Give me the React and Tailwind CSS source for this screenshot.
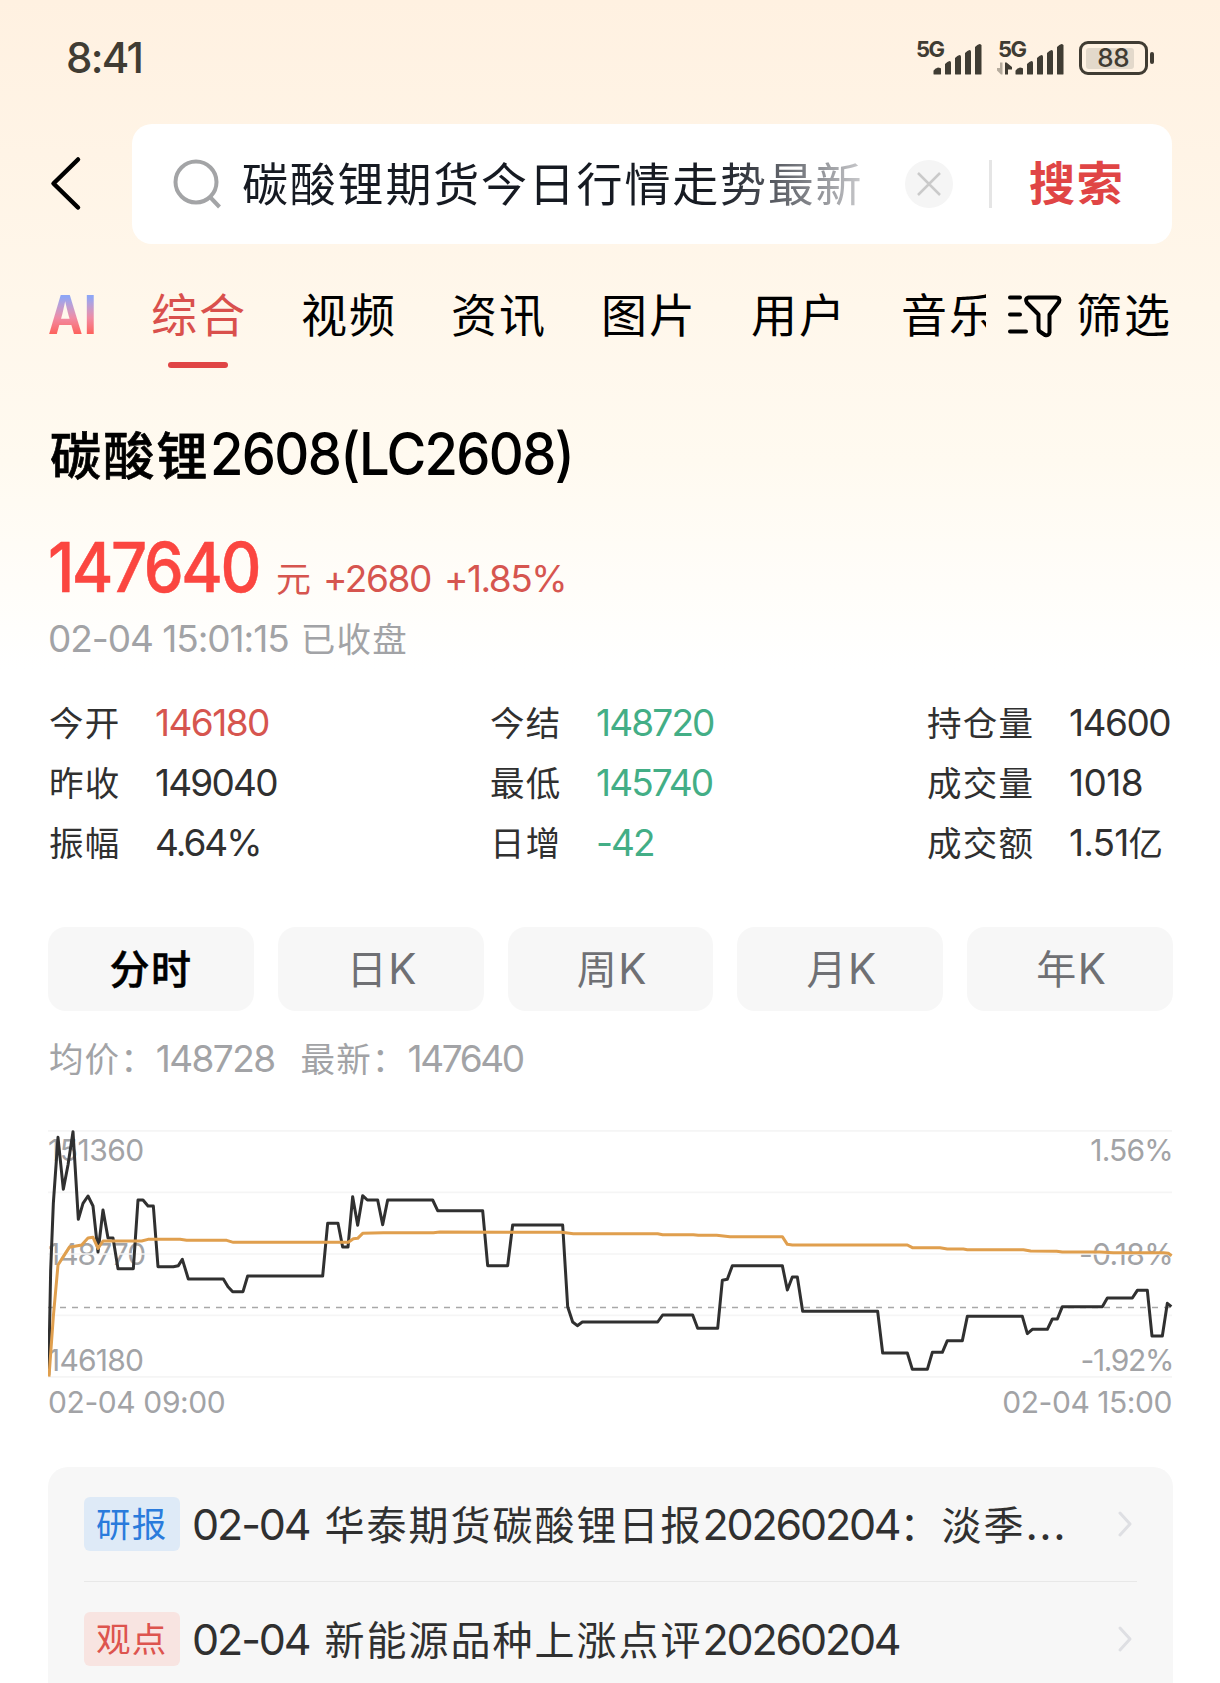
const CJK = /([\u3000-\u9fff\uff00-\uffef]+)/;

/* Latin runs use Inter, Chinese runs use Noto Sans CJK, sharing one baseline. */
function Mixed({ text, zh = "", en = "" }) {
  return text
    .split(CJK)
    .filter(Boolean)
    .map((part, i) =>
      CJK.test(part) ? (
        <span key={i} className={`font-['Noto_Sans_CJK_SC',sans-serif] leading-[0] ${zh}`}>{part}</span>
      ) : (
        <span key={i} className={`leading-[0] ${en}`}>{part}</span>
      )
    );
}

function Signal({ arrows }) {
  return (
    <div className="relative h-[33px] w-[67px]">
      <span className="absolute left-[1px] top-[-4px] text-[22px] font-bold leading-[22px] tracking-[-1.500px] text-[#403c33]">5G</span>
      <svg className="absolute inset-0" width="67" height="33" viewBox="0 0 67 33" fill="#403c33">
        <path d="M18.500 32V28.800Q20 26.500 23 25.500Q26 25.500 26 27V32Q26 32.500 25 32.500H19.500Q18.500 32.500 18.500 32Z" />
        <path d="M30 32V22Q32.500 19.500 34.500 19Q36 19 36 20.500V32Q36 32.500 35 32.500H31Q30 32.500 30 32Z" />
        <path d="M40 32V16Q42.500 13.500 44.500 13Q46 13 46 14.500V32Q46 32.500 45 32.500H41Q40 32.500 40 32Z" />
        <path d="M50 32V11Q52.500 8.500 54.500 8Q56 8 56 9.500V32Q56 32.500 55 32.500H51Q50 32.500 50 32Z" />
        <path d="M60 32V5Q62.500 2.500 64.500 2Q66.500 2 66.500 3.500V32Q66.500 32.500 65.500 32.500H61Q60 32.500 60 32Z" />
        {arrows && (
          <>
            <path d="M3 20.500H5.500V32.500H4L-0.500 28V26H3Z" fill="#b5ab9d" />
            <path d="M8 32.500V20.500H9.500L15 25V27.500H11V32.500Z" />
          </>
        )}
      </svg>
    </div>
  );
}

function StatusBar() {
  return (
    <div className="flex h-[116px] items-center justify-between pl-[66px] pr-[66px] text-[#403c33]">
      <span className="text-[42px] font-medium leading-none tracking-[-1.700px]">8:41</span>
      <div className="flex items-center">
        <Signal />
        <div className="w-[15px]" />
        <Signal arrows />
        <div className="ml-[15px] flex h-[34px] w-[69px] items-center rounded-[9px] border-[3px] border-[#403c33] p-[4px]">
          <div className="flex h-[21px] w-[48px] items-center justify-end rounded-[3px] bg-[#e3d9cb]">
            <span className="mr-[5px] text-[26px] font-medium leading-none tracking-[-0.500px]">88</span>
          </div>
        </div>
        <div className="ml-[2px] h-[12px] w-[4px] rounded-[2px] bg-[#403c33]" />
      </div>
    </div>
  );
}

function SearchBar() {
  return (
    <div className="mt-[8px] flex h-[120px] items-center pl-[48px] pr-[48px]">
      <svg width="84" height="60" viewBox="0 0 84 60" fill="none" stroke="#000" strokeWidth="4.500" strokeLinecap="round" strokeLinejoin="round">
        <path d="M30 5.500L5.500 29.500L30 53.500" />
      </svg>
      <div className="flex h-[120px] flex-1 items-center rounded-[20px] bg-white">
        <svg className="ml-[40px]" width="52" height="52" viewBox="0 0 52 52" fill="none" stroke="#a3a4a6" strokeWidth="4">
          <circle cx="24" cy="24" r="20.500" />
          <path d="M38 39L47.500 49" />
        </svg>
        <div className="relative -top-[3px] ml-[18px] w-[630px] whitespace-nowrap bg-linear-to-r from-[#161a22] from-75% to-[#d8d8da] bg-clip-text font-['Noto_Sans_CJK_SC',sans-serif] text-[46px] leading-[60px] tracking-[1.800px] text-transparent">
          碳酸锂期货今日行情走势最新
        </div>
        <div className="ml-[33px] flex size-[48px] items-center justify-center rounded-full bg-[#f5f5f5]">
          <svg width="24" height="24" viewBox="0 0 24 24" fill="none" stroke="#cacaca" strokeWidth="2.500">
            <path d="M1 1L23 23M23 1L1 23" />
          </svg>
        </div>
        <div className="ml-[36px] h-[48px] w-[3px] bg-[#e5e5e5]" />
        <span className="relative -top-[4px] ml-[37px] whitespace-nowrap font-['Noto_Sans_CJK_SC',sans-serif] text-[46px] font-bold leading-[60px] tracking-[1.800px] text-[#e04545]">搜索</span>
      </div>
    </div>
  );
}

function Tabs() {
  return (
    <div className="flex h-[140px] items-center pl-[48px] font-['Noto_Sans_CJK_SC',sans-serif] text-[46px] leading-[60px] tracking-[2px] text-black">
      <div className="w-[103px]">
        <span className="inline-block origin-left scale-x-[0.88] bg-linear-to-b from-[#8fa6f5] from-20% via-[#f08ba4] via-55% to-[#ff5a50] to-85% bg-clip-text font-['Inter',sans-serif] text-[53px] font-bold tracking-[1px] text-transparent">AI</span>
      </div>
      <div className="flex w-[835px] gap-[54px] overflow-hidden whitespace-nowrap">
        <div className="relative flex h-[140px] items-center text-[#d9504c]">
          <span className="relative -top-[2px]">综合</span>
          <div className="absolute left-[17px] top-[118px] h-[6px] w-[60px] rounded-full bg-[#e04545]" />
        </div>
        {["视频", "资讯", "图片", "用户", "音乐"].map((t) => (
          <div key={t} className="flex h-[140px] items-center">
            <span className="relative -top-[2px]">{t}</span>
          </div>
        ))}
      </div>
      <svg className="ml-[20px] mt-[5px]" width="56" height="46" viewBox="0 0 56 46" fill="none" stroke="#000" strokeWidth="4" strokeLinecap="round" strokeLinejoin="round">
        <path d="M4 3.500H14M4 20.500H14M4 37.500H20" />
        <path d="M22.500 3.500H50Q54.500 3.500 53 8L43.500 20.500V38.500Q43 42 39 41L34.500 38Q32.500 37 32.500 34.500V20.500L21 9Q18.500 4.500 22.500 3.500Z" />
      </svg>
      <span className="relative -top-[2px] ml-[14px]">筛选</span>
    </div>
  );
}

function Quote() {
  return (
    <>
      <div className="flex h-[140px] items-baseline whitespace-nowrap pl-[50px] text-[59px] font-medium leading-[140px] text-black">
        <div className="w-[160px] [-webkit-text-stroke:0.7px_black]">
          <Mixed text="碳酸锂" zh="text-[51px] tracking-[2.200px]" />
        </div>
        <span className="inline-block origin-left scale-x-[0.92] tracking-[-1.800px]">2608(LC2608)</span>
      </div>
      <div className="flex h-[87px] items-baseline whitespace-nowrap pl-[48px] leading-[87px] text-[#d6554f]">
        <span className="inline-block w-[228px] origin-left scale-x-[0.92] text-[69px] font-medium tracking-[-2.700px] text-[#fb4640] [-webkit-text-stroke:0.5px_#fb4640]">147640</span>
        <span className="font-['Noto_Sans_CJK_SC',sans-serif] text-[35px]">元</span>
        <span className="ml-[12px] w-[121px] text-[37px] tracking-[-1.400px]">+2680</span>
        <span className="text-[37px] tracking-[-1.500px]">+1.85%</span>
      </div>
      <div className="h-[55px] whitespace-nowrap pl-[48px] text-[37px] leading-[55px] text-[#a2a3a6]">
        <Mixed text="02-04 15:01:15" en="mr-[12px] tracking-[-1.050px]" />
        <Mixed text="已收盘" zh="text-[34.500px] tracking-[1.300px]" />
      </div>
    </>
  );
}

const RED = "text-[#d6554f]";
const GREEN = "text-[#43ae86]";
const stats = [
  { cls: "w-[441px]", rows: [["今开", "146180", RED, "tracking-[-1.550px]"], ["昨收", "149040", "", "tracking-[-1.800px]"], ["振幅", "4.64%", "", "tracking-[-2px]"]] },
  { cls: "w-[437px]", rows: [["今结", "148720", GREEN, "tracking-[-1.850px]"], ["最低", "145740", GREEN, "tracking-[-1.900px]"], ["日增", "-42", GREEN, "tracking-[-2px]"]] },
  { cls: "", rows: [["持仓量", "14600", "", "tracking-[-1.500px]"], ["成交量", "1018", "", "tracking-[-0.600px]"], ["成交额", "1.51亿", "", "tracking-[-0.800px]"]] },
];

function Stats() {
  return (
    <div className="mt-[27px] flex whitespace-nowrap pl-[49px] text-[37px] leading-[60px] text-[#303030]">
      {stats.map((col, c) => (
        <div key={c} className={col.cls}>
          {col.rows.map(([label, value, color, ls]) => (
            <div key={label} className="flex h-[60px]">
              <div className={c === 2 ? "w-[142px]" : "w-[106px]"}>
                <Mixed text={label} zh="text-[34.500px] tracking-[1.200px]" />
              </div>
              <div className={color}>
                <Mixed text={value} en={ls} zh="text-[34.500px]" />
              </div>
            </div>
          ))}
        </div>
      ))}
    </div>
  );
}

function Periods() {
  return (
    <div className="mx-[48px] mt-[54px] grid h-[84px] w-[1125px] grid-cols-5 gap-[24px] text-center text-[42px] leading-[84px] text-[#6f7074]">
      {["分时", "日K", "周K", "月K", "年K"].map((t, i) => (
        <div key={t} className={`rounded-[18px] bg-[#f7f7f7] ${i === 0 ? "font-medium text-black [-webkit-text-stroke:0.5px_black]" : "pl-[2px]"}`}>
          <Mixed text={t} zh="text-[40px] tracking-[1.500px]" />
        </div>
      ))}
    </div>
  );
}

const price =
  "146,795 152,480 160,280 174,82 190,238 204,165 219,65 235,328 249,280 264,258 279,288 294,426 309,300 324,384 339,384 354,476 400,476 414,270 429,270 444,288 460,288 474,470 520,470 535,467 547,448 565,507 670,507 684,530 698,545 729,545 743,498 968,498 983,340 1014,340 1028,411 1044,411 1058,260 1073,346 1088,257 1102,270 1133,270 1148,344 1163,270 1298,270 1313,302 1448,302 1463,467 1523,467 1538,345 1688,345 1703,590 1718,636 1732,647 1747,636 1973,636 1988,615 2078,615 2093,655 2153,655 2167,511 2182,508 2197,467 2347,467 2362,540 2377,501 2392,501 2408,604 2633,604 2648,729 2722,729 2737,778 2782,778 2797,727 2827,727 2842,692 2887,692 2902,619 3067,619 3082,671 3097,658 3142,658 3157,627 3172,627 3187,590 3307,590 3322,564 3397,564 3412,541 3442,541 3456,678 3487,678 3502,580 3514,590";
const average =
  "147,800 160,620 174,465 190,440 208,412 245,405 264,384 279,382 294,415 309,393 425,393 444,388 540,388 560,391 680,391 700,397 1045,397 1060,386 1073,385 1088,370 1150,368 1300,368 1320,366 1685,367 1720,371 1973,371 1988,374 2080,374 2095,376 2150,376 2190,380 2347,380 2362,403 2377,405 2722,405 2737,413 2820,413 2842,417 2890,417 2902,419 3070,419 3092,423 3170,424 3187,426 3300,426 3340,428 3490,428 3505,430 3515,437";

function Chart() {
  return (
    <div className="mx-[48px] w-[1125px] text-[30px] text-[#a2a3a6]">
      <div className="h-[95px] whitespace-nowrap text-[37px] leading-[95px]">
        <Mixed text="均价：" zh="ml-px text-[34.500px] tracking-[1.100px]" />
        <Mixed text="148728" en="tracking-[-1.600px]" />
        <span className="inline-block w-[26px]" />
        <Mixed text="最新：" zh="text-[34.500px] tracking-[1.200px]" />
        <Mixed text="147640" en="tracking-[-2.400px]" />
      </div>
      <div className="relative mt-[24px] h-[248px]">
        <div className="absolute left-0 top-[1px] text-[30px] leading-[38px] tracking-[-0.500px]">151360</div>
        <div className="absolute left-0 top-[105px] text-[30px] leading-[38px] tracking-[-1px]">148770</div>
        <div className="absolute left-0 top-[211px] text-[30px] leading-[38px] tracking-[-0.800px]">146180</div>
        <div className="absolute right-0 top-[1px] text-[30px] leading-[38px] tracking-[-0.800px]">1.56%</div>
        <div className="absolute right-0 top-[105px] text-[30px] leading-[38px] tracking-[-0.700px]">-0.18%</div>
        <div className="absolute right-0 top-[211px] text-[30px] leading-[38px] tracking-[-1.400px]">-1.92%</div>
        <svg className="absolute inset-0" width="1125" height="248" viewBox="144 60 3375 744" fill="none">
          <path d="M144 62.500H3516M144 247H3516M144 432H3516M144 616H3516M144 800.500H3516" stroke="#f5f5f5" strokeWidth="5" />
          <path d="M144 592.500H3516" stroke="#a8a8a8" strokeWidth="4" strokeDasharray="18 18" />
          <polyline points={price} stroke="#303030" strokeWidth="9" strokeLinejoin="round" />
          <polyline points={average} stroke="#e09f4e" strokeWidth="9" strokeLinejoin="round" />
        </svg>
      </div>
      <div className="flex h-[48px] justify-between pr-px leading-[48px]">
        <span className="tracking-[-0.400px]">02-04 09:00</span>
        <span className="tracking-[-0.450px]">02-04 15:00</span>
      </div>
    </div>
  );
}

const news = [
  { tag: "研报", tone: "bg-[#deeaf7] text-[#2a7bdc]", date: "02-04", text: "华泰期货碳酸锂日报20260204：淡季", more: true },
  { tag: "观点", tone: "bg-[#f8e4e1] text-[#dd544e]", date: "02-04", text: "新能源品种上涨点评20260204" },
];

function News() {
  return (
    <div className="mx-[48px] mt-[41px] w-[1125px] rounded-t-[20px] bg-[#f7f7f7] px-[36px]">
      {news.map((n, i) => (
        <div key={n.tag} className={`flex h-[115px] items-center border-b pb-px ${i === 0 ? "border-[#e8e8e8]" : "border-transparent"}`}>
          <div className={`h-[54px] w-[96px] rounded-[6px] pl-[12px] text-[37px] leading-[54px] ${n.tone}`}>
            <Mixed text={n.tag} zh="text-[34.500px] tracking-[1.300px]" />
          </div>
          <div className="ml-[12px] flex-1 whitespace-nowrap text-[43px] leading-[60px] text-[#303030]">
            <Mixed text={n.date} en="mr-[15px] tracking-[-2.100px]" />
            <Mixed text={n.text} en="tracking-[-2.200px]" zh="text-[40px] tracking-[2px]" />
            {n.more && <span className="leading-[0] tracking-[1.500px]">...</span>}
          </div>
          <svg className="mr-[4px]" width="16" height="28" viewBox="0 0 16 28" fill="none" stroke="#dedfe3" strokeWidth="3" strokeLinecap="round" strokeLinejoin="round">
            <path d="M3 3L13 14L3 25" />
          </svg>
        </div>
      ))}
    </div>
  );
}

export default function App() {
  return (
    <div className="h-[1683px] w-[1220px] overflow-hidden bg-white bg-linear-to-b from-[#fff1e1] via-[#fffaf0] via-[460px] to-white to-[670px] font-['Inter',sans-serif]">
      <StatusBar />
      <SearchBar />
      <Tabs />
      <Quote />
      <Stats />
      <Periods />
      <Chart />
      <News />
    </div>
  );
}
